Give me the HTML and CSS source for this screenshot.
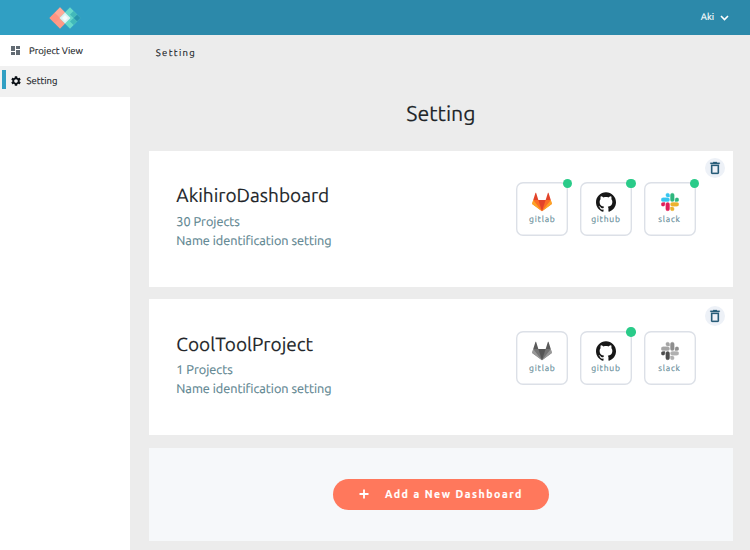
FILE: index.html
```html
<!DOCTYPE html>
<html lang="en">
<head>
<meta charset="utf-8">
<title>Setting</title>
<link rel="stylesheet" href="styles.css">
</head>
<body>
<svg class="defs" width="0" height="0" aria-hidden="true">
  <symbol id="gitlab" viewBox="123 123 340 313">
    <path class="g-side" d="M143.9 243.7h298.4l16 70L293.1 435 128 313.700z"/>
    <path class="g-edge" d="m143.9 243.7-18.9 58.1c-1.7 5.3.1 11.1 4.7 14.4L293.1 435zM442.3 243.7l18.9 58.1c1.7 5.3-.1 11.1-4.7 14.4L293.1 435z"/>
    <path class="g-mid" d="M293.1 435 355.3 243.7H231z"/>
    <path class="g-ear" d="M143.900 243.700H231l-37.400-115.300c-1.900-5.900-10.300-5.900-12.200 0zM442.300 243.700h-87l37.400-115.300c1.900-5.900 10.300-5.900 12.200 0z"/>
  </symbol>
  <symbol id="github" viewBox="0 0 24 24">
    <path d="M12 .297c-6.63 0-12 5.373-12 12 0 5.303 3.438 9.8 8.205 11.385.6.113.82-.258.82-.577 0-.285-.01-1.04-.015-2.04-3.338.724-4.042-1.61-4.042-1.61C4.422 18.07 3.633 17.7 3.633 17.7c-1.087-.744.084-.729.084-.729 1.205.084 1.838 1.236 1.838 1.236 1.07 1.835 2.809 1.305 3.495.998.108-.776.417-1.305.76-1.605-2.665-.3-5.466-1.332-5.466-5.93 0-1.31.465-2.38 1.235-3.22-.135-.303-.54-1.523.105-3.176 0 0 1.005-.322 3.3 1.23.96-.267 1.98-.399 3-.405 1.02.006 2.04.138 3 .405 2.28-1.552 3.285-1.23 3.285-1.23.645 1.653.24 2.873.12 3.176.765.84 1.23 1.91 1.23 3.22 0 4.61-2.805 5.625-5.475 5.92.42.36.81 1.096.81 2.22 0 1.606-.015 2.896-.015 3.286 0 .315.21.69.825.57C20.565 22.092 24 17.592 24 12.297c0-6.627-5.373-12-12-12"/>
  </symbol>
  <symbol id="slack" viewBox="-.3 -.3 24.600 24.600">
    <path class="s-a" d="M5.042 15.165a2.528 2.528 0 0 1-2.52 2.523A2.528 2.528 0 0 1 0 15.165a2.527 2.527 0 0 1 2.522-2.52h2.52zM6.313 15.165a2.527 2.527 0 0 1 2.521-2.52 2.527 2.527 0 0 1 2.521 2.52v6.313A2.528 2.528 0 0 1 8.834 24a2.528 2.528 0 0 1-2.521-2.522z"/>
    <path class="s-b" transform="rotate(90 12 12)" d="M5.042 15.165a2.528 2.528 0 0 1-2.52 2.523A2.528 2.528 0 0 1 0 15.165a2.527 2.527 0 0 1 2.522-2.52h2.52zM6.313 15.165a2.527 2.527 0 0 1 2.521-2.52 2.527 2.527 0 0 1 2.521 2.52v6.313A2.528 2.528 0 0 1 8.834 24a2.528 2.528 0 0 1-2.521-2.522z"/>
    <path class="s-c" transform="rotate(180 12 12)" d="M5.042 15.165a2.528 2.528 0 0 1-2.52 2.523A2.528 2.528 0 0 1 0 15.165a2.527 2.527 0 0 1 2.522-2.52h2.52zM6.313 15.165a2.527 2.527 0 0 1 2.521-2.52 2.527 2.527 0 0 1 2.521 2.52v6.313A2.528 2.528 0 0 1 8.834 24a2.528 2.528 0 0 1-2.521-2.522z"/>
    <path class="s-d" transform="rotate(270 12 12)" d="M5.042 15.165a2.528 2.528 0 0 1-2.52 2.523A2.528 2.528 0 0 1 0 15.165a2.527 2.527 0 0 1 2.522-2.52h2.52zM6.313 15.165a2.527 2.527 0 0 1 2.521-2.52 2.527 2.527 0 0 1 2.521 2.52v6.313A2.528 2.528 0 0 1 8.834 24a2.528 2.528 0 0 1-2.521-2.522z"/>
  </symbol>
  <symbol id="trash" viewBox="0 0 24 24">
    <path d="M6 19c0 1.1.9 2 2 2h8c1.1 0 2-.9 2-2V7H6zM8 9h8v10H8zm7.5-5-1-1h-5l-1 1H5v2h14V4z"/>
  </symbol>
</svg>

<header class="topbar">
  <div class="brand">
    <svg width="32" height="22" viewBox="0 0 32 22">
      <path fill="#ff9a87" d="M.5 11 11 .3 21.5 11 11 21.7z"/>
      <path fill="#ffb9aa" d="M11 .3 16.2 5.6 5.7 16.3.5 11z" opacity=".5"/>
      <path fill="#ff7e69" d="M.5 11 5.7 5.7 11 11 5.7 16.3z" opacity=".5"/>
      <path fill="#66d8ca" d="M10.5 11 21 .3 31.5 11 21 21.7z"/>
      <path fill="#2795ad" d="M31.5 11 28 7.4 24.5 11l3.5 3.6z"/>
      <path fill="#42b9ba" d="M28 7.4 24.500 3.900 21 7.400l3.500 3.600zM28 14.600 24.500 18.100 21 14.600l3.500-3.600z"/>
      <path fill="#dcf3f3" d="M16 5.5 21.5 11 16 16.500 10.500 11z"/>
      <path fill="#fff" d="M16 8 19 11 16 14 13 11z" opacity=".7"/>
    </svg>
  </div>
  <div class="user"><span>Aki</span>
    <svg width="9" height="6" viewBox="0 0 9 6"><path d="m1 1 3.5 3.5L8 1" fill="none" stroke="#fff" stroke-width="1.6"/></svg>
  </div>
</header>

<div class="layout">
  <nav class="sidebar">
    <a class="nav-item">
      <svg width="9" height="9" viewBox="0 0 18 18"><path fill="#626b73" d="M0 10h8V0H0zm0 8h8v-6H0zm10 0h8V8h-8zm0-18v6h8V0z"/></svg>
      <span>Project View</span>
    </a>
    <a class="nav-item active">
      <svg width="10" height="10" viewBox="2 2 20 20"><path fill="#0b1016" d="M19.140 12.940c.04-.3.060-.610.060-.940 0-.320-.020-.640-.070-.940l2.030-1.580c.180-.140.230-.410.120-.610l-1.920-3.320c-.120-.220-.370-.290-.590-.220l-2.390.960c-.5-.380-1.030-.7-1.620-.940l-.360-2.540c-.040-.240-.240-.410-.480-.410h-3.840c-.240 0-.430.170-.470.410l-.360 2.540c-.590.240-1.130.570-1.620.940l-2.390-.960c-.220-.080-.470 0-.590.220L2.740 8.870c-.120.210-.080.470.120.610l2.030 1.580c-.050.3-.090.630-.090.940s.020.640.070.940l-2.030 1.580c-.180.140-.230.410-.120.610l1.920 3.320c.120.220.370.290.590.220l2.390-.960c.5.380 1.030.7 1.620.940l.360 2.540c.050.240.240.410.480.410h3.840c.240 0 .440-.170.470-.410l.360-2.540c.590-.240 1.130-.560 1.620-.940l2.390.960c.220.080.470 0 .590-.220l1.920-3.320c.120-.220.070-.470-.120-.610zM12 15.600c-1.980 0-3.600-1.620-3.600-3.600s1.620-3.600 3.600-3.600 3.600 1.620 3.600 3.600-1.620 3.600-3.600 3.600z"/></svg>
      <span>Setting</span>
    </a>
  </nav>

  <main class="content">
    <div class="crumb">Setting</div>
    <h1>Setting</h1>

    <section class="card">
      <div class="info">
        <h2>AkihiroDashboard</h2>
        <p>30 Projects</p>
        <p>Name identification setting</p>
      </div>
      <div class="tools">
        <div class="tool"><i class="dot"></i><svg class="gitlab" width="20" height="19"><use href="#gitlab"/></svg><span>gitlab</span></div>
        <div class="tool"><i class="dot"></i><svg class="github" width="20" height="20"><use href="#github"/></svg><span>github</span></div>
        <div class="tool"><i class="dot"></i><svg class="slack" width="18" height="18"><use href="#slack"/></svg><span>slack</span></div>
      </div>
      <div class="delete"><svg width="16" height="16"><use href="#trash"/></svg></div>
    </section>

    <section class="card">
      <div class="info">
        <h2>CoolToolProject</h2>
        <p>1 Projects</p>
        <p>Name identification setting</p>
      </div>
      <div class="tools">
        <div class="tool off"><svg class="gitlab" width="20" height="19"><use href="#gitlab"/></svg><span>gitlab</span></div>
        <div class="tool"><i class="dot"></i><svg class="github" width="20" height="20"><use href="#github"/></svg><span>github</span></div>
        <div class="tool off"><svg class="slack" width="18" height="18"><use href="#slack"/></svg><span>slack</span></div>
      </div>
      <div class="delete"><svg width="16" height="16"><use href="#trash"/></svg></div>
    </section>

    <section class="add">
      <button class="add-button">
        <svg width="10" height="10" viewBox="0 0 10 10"><path d="M5 .5v9M.5 5h9" stroke="#fff" stroke-width="1.8"/></svg>
        <span>Add a New Dashboard</span>
      </button>
    </section>
  </main>
</div>
</body>
</html>
```
FILE: styles.css
```css
* { box-sizing: border-box; }
body {
  margin: 0;
  height: 550px;
  overflow: hidden;
  background: #ececec;
  color: #212529;
  font-family: Ubuntu, "Noto Sans", sans-serif;
  text-rendering: geometricPrecision;
  -webkit-text-stroke: 0.15px currentColor;
}
.defs { position: absolute; }
svg { display: block; flex: none; }
h1, h2, p { margin: 0; font-weight: 400; white-space: nowrap; }

.topbar {
  display: flex;
  justify-content: space-between;
  height: 35px;
  background: #2c89aa;
}
.brand {
  display: flex;
  justify-content: center;
  align-items: center;
  width: 130px;
  background: #309fc3;
}
.user {
  display: flex;
  align-items: center;
  gap: 6px;
  padding: 0 21px 2px 0;
  color: #fff;
  font-size: 9.5px;
}
.user svg { margin-top: 3px; }

.layout { display: flex; height: 515px; }
.sidebar { width: 130px; background: #fff; }
.nav-item {
  display: flex;
  align-items: center;
  gap: 9px;
  height: 31px;
  padding: 0 0 1px 11px;
  font-size: 9.5px;
  white-space: nowrap;
}
.nav-item.active {
  gap: 6px;
  padding-left: 10.5px;
  height: 30.5px;
  background: linear-gradient(#309fc3, #309fc3) 2px 4px / 4px 19px no-repeat #f1f1f1;
}

.content { flex: 1; padding: 0 17.5px 0 19.3px; }
.crumb {
  height: 36px;
  padding-left: 6.5px;
  font-size: 9.5px;
  line-height: 36px;
  letter-spacing: 1.35px;
}
h1 {
  height: 79.5px;
  font-size: 21.3px;
  line-height: 87px;
  text-align: center;
}
.card {
  position: relative;
  display: flex;
  justify-content: space-between;
  height: 136px;
  margin-bottom: 12.5px;
  padding: 31.5px 37px 0 27px;
  background: #fff;
}
h2 { height: 30.5px; font-size: 19px; line-height: 27px; }
.info p { color: #5c848f; font-size: 12.7px; line-height: 19px; }
.tools { display: flex; gap: 11.6px; }
.tool {
  position: relative;
  display: flex;
  flex-direction: column;
  align-items: center;
  width: 52px;
  height: 54px;
  padding-top: 10px;
  box-shadow: inset 0 0 0 1.4px #dce0e7;
  border-radius: 7px;
  color: #638a97;
  font-size: 8.5px;
  line-height: 12px;
  letter-spacing: 0.75px;
}
.tool svg { height: 20px; }
.tool span { margin-top: 1px; }
.dot {
  position: absolute;
  top: -3.5px;
  right: -3.8px;
  width: 9.5px;
  height: 9.5px;
  border-radius: 50%;
  background: #2acb89;
}
.delete {
  position: absolute;
  top: 7px;
  right: 7.5px;
  display: grid;
  place-items: center;
  width: 20px;
  height: 20px;
  border-radius: 50%;
  background: #edf1f7;
  fill: #285d78;
  stroke: #285d78;
  stroke-width: 0.4px;
}
.github { fill: #171717; }
.gitlab { --mid: #e24329; --side: #fc6d26; --edge: #fca326; --ear: #e24329; }
.off .gitlab { --mid: #555; --side: #747474; --edge: #999; --ear: #5a5a5a; }
.g-mid { fill: var(--mid); }
.g-side { fill: var(--side); }
.g-edge { fill: var(--edge); }
.g-ear { fill: var(--ear); }
.slack { --a: #e01e5a; --b: #36c5f0; --c: #2eb67d; --d: #ecb22e; }
.off .slack { --a: #4c4c4c; --b: #a5a5a5; --c: #8e8e8e; --d: #b0b0b0; }
.s-a { fill: var(--a); stroke: var(--a); stroke-width: 0.5px; }
.s-b { fill: var(--b); stroke: var(--b); stroke-width: 0.5px; }
.s-c { fill: var(--c); stroke: var(--c); stroke-width: 0.5px; }
.s-d { fill: var(--d); stroke: var(--d); stroke-width: 0.5px; }

.add {
  display: flex;
  justify-content: center;
  align-items: center;
  height: 93px;
  background: #f6f8fa;
}
.add-button {
  display: flex;
  align-items: center;
  gap: 16px;
  width: 216px;
  height: 31px;
  padding: 0 0 0 26px;
  border: 0;
  border-radius: 16px;
  background: #ff785c;
  color: #fff;
  font: 700 10.6px Ubuntu, "Noto Sans", sans-serif;
  letter-spacing: 1.5px;
  white-space: nowrap;
}
```
